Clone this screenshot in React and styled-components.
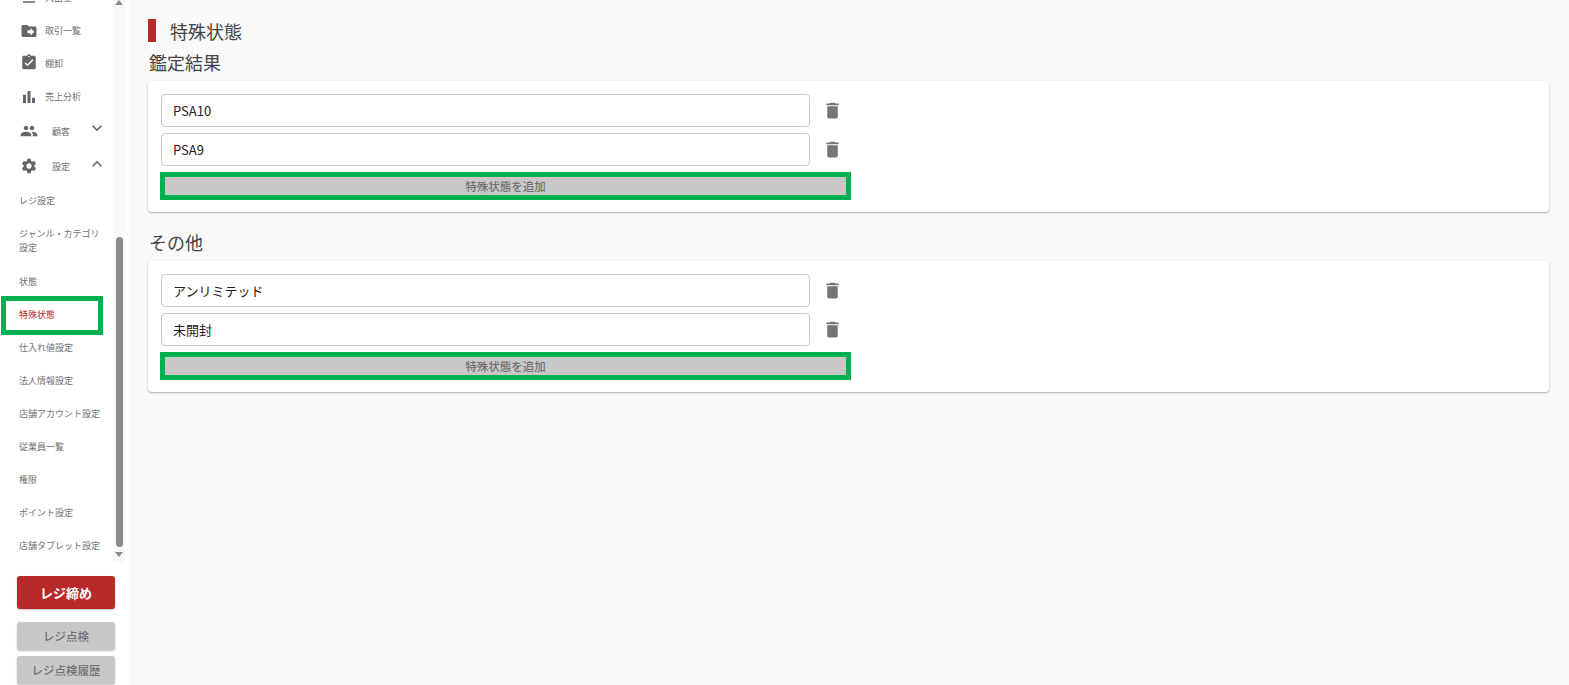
import styled, { createGlobalStyle } from "styled-components";
import {
  MdDriveFileMove,
  MdAssignmentTurnedIn,
  MdBarChart,
  MdPeople,
  MdSettings,
  MdExpandMore,
  MdExpandLess,
  MdDelete,
  MdViewHeadline,
} from "react-icons/md";

const GlobalStyle = createGlobalStyle`
  html, body { margin: 0; padding: 0; height: 100%; }
  body {
    background: #f9f9f9;
    font-family: "Noto Sans CJK JP", "Noto Sans", sans-serif;
    overflow: hidden;
  }
`;

const Page = styled.div`
  display: flex;
  width: 1569px;
  height: 685px;
  overflow: hidden;
`;

const Sidebar = styled.aside`
  width: 129px;
  flex-shrink: 0;
  height: 685px;
  background: #fff;
  display: flex;
  flex-direction: column;
`;

const NavArea = styled.div`
  display: flex;
  height: 563px;
  flex-shrink: 0;
  padding-right: 4px;
`;

const NavClip = styled.div`
  flex: 1;
  min-width: 0;
  overflow: hidden;
`;

const NavList = styled.ul`
  list-style: none;
  margin: -19px 0 0;
  padding: 0;
`;

const IconRow = styled.li`
  display: flex;
  align-items: center;
  height: ${(p) => p.$h || 33}px;
  padding-left: 20px;
  color: #707070;
  font-size: 9px;
`;

const IconBox = styled.span`
  display: flex;
  justify-content: center;
  width: 18px;
  font-size: ${(p) => p.$size || 20}px;
  color: #666;
  margin-right: 7px;
  margin-bottom: ${(p) => p.$lift || 0}px;
`;

const WideLabel = styled.span`
  margin-left: 7px;
  width: 35px;
  padding-top: 1px;
`;

const Chevron = styled.span`
  display: flex;
  font-size: 20px;
  color: #666;
  margin-top: -5px;
`;

const SubRow = styled.li`
  position: relative;
  display: flex;
  align-items: center;
  min-height: ${(p) => p.$h || 33}px;
  padding: 0 8px 0 19px;
  font-size: 9px;
  line-height: 14px;
  color: ${(p) => (p.$active ? "#b82a2a" : "#707070")};

  ${(p) =>
    p.$outlined &&
    `
    &::after {
      content: "";
      position: absolute;
      left: 1px;
      top: -2px;
      width: 102px;
      height: 39px;
      box-sizing: border-box;
      border: 5px solid #00b050;
    }
  `}
`;

const ScrollTrack = styled.div`
  width: 12px;
  background: #f8f8f8;
  display: flex;
  flex-direction: column;
  align-items: center;
`;

const ArrowUp = styled.div`
  width: 0;
  height: 0;
  border-left: 4px solid transparent;
  border-right: 4px solid transparent;
  border-bottom: 5px solid #8a8a8a;
`;

const ArrowDown = styled.div`
  width: 0;
  height: 0;
  margin-top: 5px;
  border-left: 4px solid transparent;
  border-right: 4px solid transparent;
  border-top: 5px solid #8a8a8a;
`;

const Thumb = styled.div`
  width: 7px;
  height: 310px;
  margin-top: 232px;
  border-radius: 4px;
  background: #8a8a8a;
`;

const SideButtons = styled.div`
  display: flex;
  flex-direction: column;
  padding: 13px 14px 0 17px;
`;

const SideButton = styled.button`
  height: ${(p) => (p.$primary ? 33 : 28)}px;
  margin-bottom: ${(p) => (p.$primary ? 13 : 6)}px;
  border: none;
  border-radius: 3px;
  padding: 0;
  font-family: inherit;
  font-size: ${(p) => (p.$primary ? 13 : 11.5)}px;
  font-weight: ${(p) => (p.$primary ? 700 : 500)};
  color: ${(p) => (p.$primary ? "#fff" : "#707070")};
  background: ${(p) => (p.$primary ? "#b82a2a" : "#c8c8c8")};
  box-shadow: 0 1px 2px rgba(0, 0, 0, 0.25);
`;

const Main = styled.main`
  flex: 1;
  min-width: 0;
  padding: 19px 20px 0 19px;
`;

const PageTitle = styled.h1`
  display: flex;
  align-items: center;
  height: 23px;
  margin: 0;
  font-size: 18px;
  font-weight: 400;
  color: #444;
  &::before {
    content: "";
    width: 8px;
    height: 23px;
    margin-right: 14px;
    background: #b82a2a;
  }
`;

const SectionTitle = styled.h2`
  margin: 0;
  height: 19px;
  line-height: 19px;
  padding-left: 1px;
  font-size: 18px;
  font-weight: 400;
  color: #444;
`;

const Section = styled.section`
  margin-top: 11px;
  margin-bottom: 21px;
  & + & {
    margin-top: 0;
  }
`;

const Card = styled.div`
  margin-top: 8.5px;
  padding: 13.5px 13px 12px;
  background: #fff;
  border-radius: 4px;
  box-shadow: 0 1px 2px rgba(0, 0, 0, 0.3);
`;

const FieldRow = styled.div`
  display: flex;
  align-items: center;
  margin-bottom: 6.5px;
`;

const TextField = styled.input`
  width: 649px;
  height: 32.5px;
  box-sizing: border-box;
  padding: 0 11px;
  border: 1px solid #c9c9c9;
  border-radius: 4px;
  background: #fff;
  font-family: inherit;
  font-size: 13px;
  color: #222;
  outline: none;
`;

const TrashButton = styled.span`
  display: flex;
  margin-left: 12px;
  font-size: 21px;
  color: #757575;
`;

const AddButton = styled.button`
  display: block;
  width: 691px;
  height: 28px;
  margin-left: -1px;
  box-sizing: border-box;
  border: 5px solid #00b050;
  padding: 0;
  background: #c8c8c8;
  font-family: inherit;
  font-size: 11.5px;
  font-weight: 500;
  line-height: 18px;
  color: #707070;
`;

const sections = [
  { title: "鑑定結果", values: ["PSA10", "PSA9"] },
  { title: "その他", values: ["アンリミテッド", "未開封"] },
];

const subItems = [
  "状態",
  "特殊状態",
  "仕入れ値設定",
  "法人情報設定",
  "店舗アカウント設定",
  "従業員一覧",
  "権限",
  "ポイント設定",
  "店舗タブレット設定",
];

const App = () => {
  return (
    <Page>
      <GlobalStyle />
      <Sidebar>
        <NavArea>
          <NavClip>
            <NavList>
              <IconRow>
                <IconBox $size={23}><MdViewHeadline /></IconBox>入出金
              </IconRow>
              <IconRow>
                <IconBox><MdDriveFileMove /></IconBox>取引一覧
              </IconRow>
              <IconRow>
                <IconBox $size={21} $lift={3}><MdAssignmentTurnedIn /></IconBox>棚卸
              </IconRow>
              <IconRow>
                <IconBox><MdBarChart /></IconBox>売上分析
              </IconRow>
              <IconRow $h={35}>
                <IconBox $size={22}><MdPeople /></IconBox>
                <WideLabel>顧客</WideLabel>
                <Chevron><MdExpandMore /></Chevron>
              </IconRow>
              <IconRow $h={36}>
                <IconBox $size={22}><MdSettings /></IconBox>
                <WideLabel>設定</WideLabel>
                <Chevron><MdExpandLess /></Chevron>
              </IconRow>
              <SubRow>レジ設定</SubRow>
              <SubRow $h={48}>ジャンル・カテゴリ設定</SubRow>
              {subItems.map((label) => (
                <SubRow
                  key={label}
                  $active={label === "特殊状態"}
                  $outlined={label === "特殊状態"}
                >
                  {label}
                </SubRow>
              ))}
            </NavList>
          </NavClip>
          <ScrollTrack>
            <ArrowUp />
            <Thumb />
            <ArrowDown />
          </ScrollTrack>
        </NavArea>
        <SideButtons>
          <SideButton $primary>レジ締め</SideButton>
          <SideButton>レジ点検</SideButton>
          <SideButton>レジ点検履歴</SideButton>
        </SideButtons>
      </Sidebar>
      <Main>
        <PageTitle>特殊状態</PageTitle>
        {sections.map((section) => (
          <Section key={section.title}>
            <SectionTitle>{section.title}</SectionTitle>
            <Card>
              {section.values.map((value) => (
                <FieldRow key={value}>
                  <TextField defaultValue={value} />
                  <TrashButton><MdDelete /></TrashButton>
                </FieldRow>
              ))}
              <AddButton>特殊状態を追加</AddButton>
            </Card>
          </Section>
        ))}
      </Main>
    </Page>
  );
};

export default App;
